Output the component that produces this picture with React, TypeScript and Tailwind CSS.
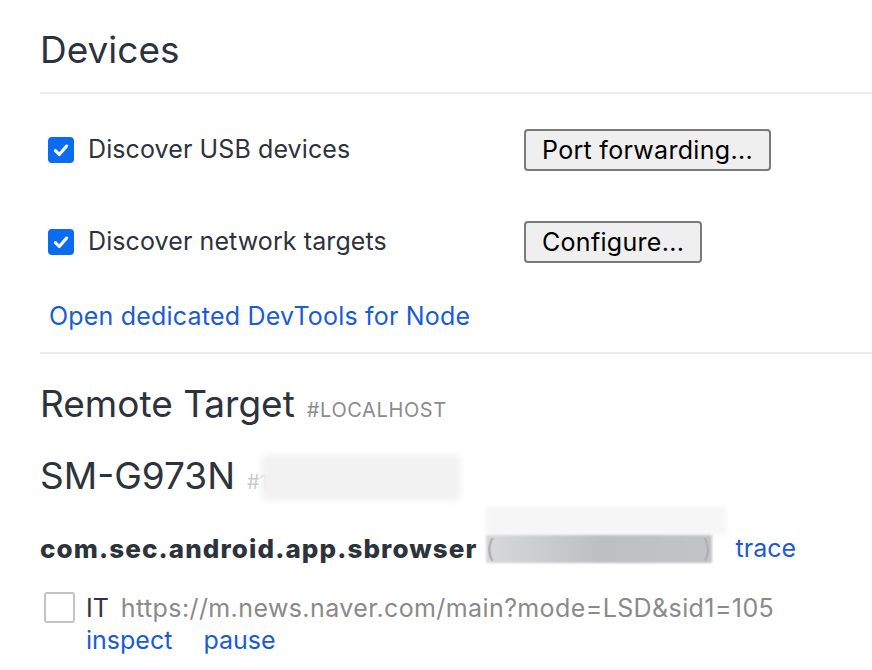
import React from "react";

const Check = ({ checked }: { checked: boolean }) =>
  checked ? (
    <span className="flex h-[26px] w-[26px] items-center justify-center rounded-[4px] bg-[#0b6cf2]">
      <svg width="18" height="18" viewBox="0 0 16 16">
        <path d="M3 8.5 L6.5 12 L13 4.5" stroke="white" strokeWidth="2.8" fill="none" strokeLinecap="round" strokeLinejoin="round" />
      </svg>
    </span>
  ) : (
    <span className="block h-[31px] w-[31px] rounded-[3px] border-2 border-[#c4c4c4] bg-white" />
  );

const Btn = ({ children }: { children: React.ReactNode }) => (
  <button className="h-[42px] rounded-[4px] border-2 border-[#7a7a7a] bg-[#efefef] px-[16px] text-[25px] leading-none tracking-[0.3px] text-black">
    {children}
  </button>
);

export default function App() {
  return (
    <div
      className="h-[670px] w-[872px] overflow-hidden bg-white text-[#2d333b]"
      style={{ fontFamily: 'Inter, "Liberation Sans", Arial, sans-serif' }}
    >
      <div className="pl-[40px]">
        <h1 className="pt-[26px] text-[37px] leading-[48px]">Devices</h1>
        <div className="mt-[18px] h-[2px] bg-[#ebebeb]" />
        <div className="mt-[35px] flex h-[42px] items-center">
          <div className="flex w-[484px] items-center pl-[8px]">
            <Check checked />
            <span className="ml-[14px] text-[25px] tracking-[0.1px]">Discover USB devices</span>
          </div>
          <Btn>Port forwarding...</Btn>
        </div>
        <div className="mt-[50px] flex h-[42px] items-center">
          <div className="flex w-[484px] items-center pl-[8px]">
            <Check checked />
            <span className="ml-[14px] text-[25px] tracking-[0.1px]">Discover network targets</span>
          </div>
          <Btn>Configure...</Btn>
        </div>
        <div className="mt-[37px] pl-[9px] text-[25px] leading-[32px] tracking-[0.2px] text-[#1a5bd6]">
          Open dedicated DevTools for Node
        </div>
        <div className="mt-[20px] h-[2px] bg-[#ebebeb]" />
        <div className="mt-[26px] flex items-baseline">
          <span className="text-[37px] leading-[48px]">Remote Target</span>
          <span className="ml-[12px] text-[20px] tracking-[0.6px] text-[#8c8c8c]">#LOCALHOST</span>
        </div>
        <div className="mt-[24px] flex items-baseline">
          <span className="text-[37px] leading-[48px]">SM-G973N</span>
          <span className="relative ml-[12px] text-[20px] text-[#c8c8c8]">
            #1
            <span className="absolute left-[14px] top-[-12px] h-[46px] w-[200px] rounded-[6px] bg-[#f2f2f2] blur-[3px]" />
          </span>
        </div>
        <div className="mt-[30px] flex items-center">
          <span className="text-[26px] font-extrabold leading-[32px] tracking-[1.1px]">com.sec.android.app.sbrowser</span>
          <span className="relative ml-[8px] flex h-[28px] w-[226px] items-center justify-between text-[25px] text-[#b0b0b0]">
            <span className="absolute left-0 top-[-28px] h-[28px] w-[240px] bg-[#f6f6f6] blur-[2px]" />
            <span className="absolute inset-0 bg-gradient-to-r from-[#d8d9db] via-[#bebfc2] to-[#c3c4c7] blur-[1px]" />
            <span className="relative">(</span>
            <span className="relative">)</span>
          </span>
          <span className="ml-[24px] text-[25px] text-[#1a5bd6]">trace</span>
        </div>
        <div className="mt-[24px] flex items-start pl-[4px]">
          <Check checked={false} />
          <div className="ml-[11px] flex flex-col">
            <div className="flex items-baseline text-[25px] leading-[32px]">
              <span>IT</span>
              <span className="ml-[12px] tracking-[0.4px] text-[#8a8a8a]">https://m.news.naver.com/main?mode=LSD&amp;sid1=105</span>
            </div>
            <div className="flex text-[25px] leading-[32px] text-[#1a5bd6]">
              <span>inspect</span>
              <span className="ml-[31px]">pause</span>
            </div>
          </div>
        </div>
      </div>
    </div>
  );
}
